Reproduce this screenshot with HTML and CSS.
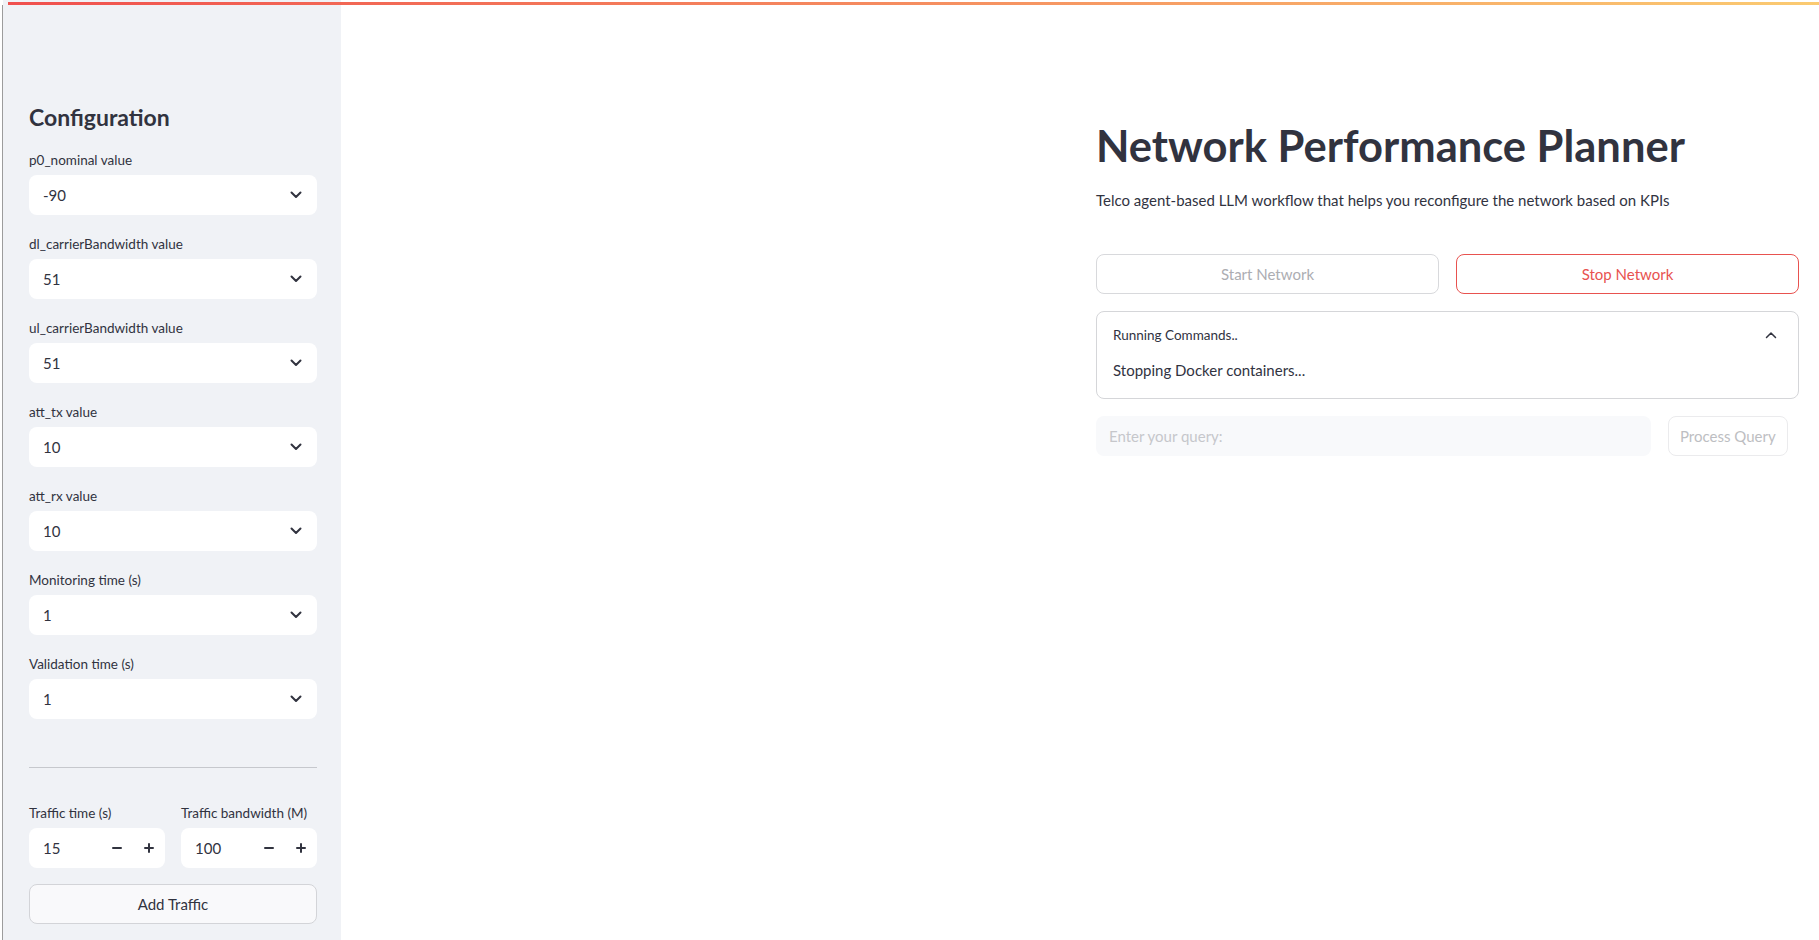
FILE: index.html
```html
<!DOCTYPE html>
<html lang="en">
<head>
<meta charset="utf-8">
<title>Network Performance Planner</title>
<link rel="stylesheet" href="styles.css">
</head>
<body>
<div class="decoration"></div>
<div class="app">
  <div class="edge"></div>
  <aside class="sidebar">
    <h2 class="sb-title">Configuration</h2>
    <div class="field">
      <div class="field-label">p0_nominal value</div>
      <div class="select"><span>-90</span><svg class="chev" viewBox="0 0 12 8" width="12" height="8"><path d="M1.5 1.5 L6 6 L10.5 1.5"/></svg></div>
    </div>
    <div class="field">
      <div class="field-label">dl_carrierBandwidth value</div>
      <div class="select"><span>51</span><svg class="chev" viewBox="0 0 12 8" width="12" height="8"><path d="M1.5 1.5 L6 6 L10.5 1.5"/></svg></div>
    </div>
    <div class="field">
      <div class="field-label">ul_carrierBandwidth value</div>
      <div class="select"><span>51</span><svg class="chev" viewBox="0 0 12 8" width="12" height="8"><path d="M1.5 1.5 L6 6 L10.5 1.5"/></svg></div>
    </div>
    <div class="field">
      <div class="field-label">att_tx value</div>
      <div class="select"><span>10</span><svg class="chev" viewBox="0 0 12 8" width="12" height="8"><path d="M1.5 1.5 L6 6 L10.5 1.5"/></svg></div>
    </div>
    <div class="field">
      <div class="field-label">att_rx value</div>
      <div class="select"><span>10</span><svg class="chev" viewBox="0 0 12 8" width="12" height="8"><path d="M1.5 1.5 L6 6 L10.5 1.5"/></svg></div>
    </div>
    <div class="field">
      <div class="field-label">Monitoring time (s)</div>
      <div class="select"><span>1</span><svg class="chev" viewBox="0 0 12 8" width="12" height="8"><path d="M1.5 1.5 L6 6 L10.5 1.5"/></svg></div>
    </div>
    <div class="field">
      <div class="field-label">Validation time (s)</div>
      <div class="select"><span>1</span><svg class="chev" viewBox="0 0 12 8" width="12" height="8"><path d="M1.5 1.5 L6 6 L10.5 1.5"/></svg></div>
    </div>
    <hr class="divider">
    <div class="num-row">
      <div class="num-field">
        <div class="field-label">Traffic time (s)</div>
        <div class="num-input">
          <span class="num-val">15</span>
          <span class="step"><svg viewBox="0 0 10 10" width="10" height="10"><path d="M1 5 H9"/></svg></span>
          <span class="step"><svg viewBox="0 0 10 10" width="10" height="10"><path d="M1 5 H9 M5 1 V9"/></svg></span>
        </div>
      </div>
      <div class="num-field">
        <div class="field-label">Traffic bandwidth (M)</div>
        <div class="num-input">
          <span class="num-val">100</span>
          <span class="step"><svg viewBox="0 0 10 10" width="10" height="10"><path d="M1 5 H9"/></svg></span>
          <span class="step"><svg viewBox="0 0 10 10" width="10" height="10"><path d="M1 5 H9 M5 1 V9"/></svg></span>
        </div>
      </div>
    </div>
    <button class="btn-secondary">Add Traffic</button>
  </aside>
  <main class="main">
    <div class="block">
      <h1 class="title">Network Performance Planner</h1>
      <p class="subtitle">Telco agent-based LLM workflow that helps you reconfigure the network based on KPIs</p>
      <div class="btn-row">
        <button class="btn btn-disabled">Start Network</button>
        <button class="btn btn-active">Stop Network</button>
      </div>
      <div class="expander">
        <div class="exp-head">
          <span>Running Commands..</span>
          <svg class="chev-up" viewBox="0 0 12 8" width="12" height="8"><path d="M1.5 6.5 L6 2 L10.5 6.5"/></svg>
        </div>
        <div class="exp-body">Stopping Docker containers...</div>
      </div>
      <div class="query-row">
        <div class="query-input">Enter your query:</div>
        <button class="btn-query">Process Query</button>
      </div>
    </div>
  </main>
</div>
</body>
</html>
```
FILE: styles.css
```css
html, body {
  margin: 0;
  padding: 0;
  background: #ffffff;
  overflow: hidden;
  width: 1819px;
  height: 940px;
}

body {
  font-family: Lato, "Noto Sans", "Liberation Sans", sans-serif;
  color: #31333f;
  position: relative;
}

.decoration {
  position: absolute;
  top: 2px;
  left: 8px;
  right: 0;
  height: 3px;
  background-image: linear-gradient(90deg, rgb(240, 80, 78), rgb(255, 253, 128));
  background-size: 2552px 100%;
  background-repeat: no-repeat;
  z-index: 5;
}

.app {
  display: flex;
  height: 940px;
  padding-left: 2px;
  box-sizing: border-box;
}

.edge {
  width: 1px;
  background: #9c9c9c;
  margin-top: 5px;
  flex: none;
}

.sidebar {
  width: 338px;
  flex: none;
  background: #f0f2f6;
  box-sizing: border-box;
  padding: 103px 24px 0 26px;
  display: flex;
  flex-direction: column;
}

.sb-title {
  margin: 0 0 18px;
  font-size: 23px;
  line-height: 29px;
  font-weight: 700;
}

.field {
  margin-bottom: 19px;
}

.field-label {
  font-size: 13.5px;
  line-height: 21px;
  height: 21px;
  margin-bottom: 4px;
}

.select {
  height: 40px;
  background: #ffffff;
  border-radius: 8px;
  display: flex;
  align-items: center;
  justify-content: space-between;
  padding: 0 15px 0 14px;
  font-size: 15px;
}

.chev path, .chev-up path, .step path {
  fill: none;
  stroke: #31333f;
  stroke-width: 2;
  stroke-linecap: round;
  stroke-linejoin: round;
}

.chev-up path {
  stroke-width: 1.5;
}

.divider {
  border: none;
  border-top: 1px solid #c6c8cd;
  margin: 29px 0 35px;
  height: 0;
}

.num-row {
  display: grid;
  grid-template-columns: 1fr 1fr;
  gap: 16px;
}

.num-input {
  height: 40px;
  background: #ffffff;
  border-radius: 8px;
  display: flex;
  align-items: center;
  padding-left: 14px;
  font-size: 15px;
}

.num-val {
  flex: 1;
}

.step {
  width: 32px;
  height: 40px;
  display: flex;
  align-items: center;
  justify-content: center;
}

.btn-secondary {
  margin-top: 16px;
  height: 40px;
  border: 1px solid #d3d4d8;
  border-radius: 8px;
  background: #f9f9fb;
  font-family: inherit;
  font-size: 15px;
  color: #31333f;
}

.main {
  flex: 1;
  min-width: 0;
}

.block {
  width: 703px;
  margin-left: 755px;
  padding-top: 119px;
}

.title {
  margin: 0;
  font-size: 43.5px;
  line-height: 53px;
  font-weight: 700;
}

.subtitle {
  margin: 16px 0 0;
  font-size: 15px;
  line-height: 24px;
}

.btn-row {
  margin-top: 42px;
  display: grid;
  grid-template-columns: 1fr 1fr;
  gap: 17px;
}

.btn {
  height: 40px;
  border-radius: 8px;
  background: #ffffff;
  font-family: inherit;
  font-size: 15px;
}

.btn-disabled {
  border: 1px solid #d8d9dc;
  color: #acadb2;
}

.btn-active {
  border: 1px solid #e8524f;
  color: #e8524f;
}

.expander {
  margin-top: 17px;
  border: 1px solid #d5d6d9;
  border-radius: 8px;
}

.exp-head {
  height: 46px;
  display: flex;
  align-items: center;
  justify-content: space-between;
  padding: 0 21px 0 16px;
  font-size: 13.5px;
}

.exp-body {
  padding: 0 16px 16px;
  font-size: 15px;
  line-height: 24px;
}

.query-row {
  margin-top: 17px;
  display: flex;
  gap: 17px;
}

.query-input {
  width: 555px;
  height: 40px;
  box-sizing: border-box;
  background: #f8f9fb;
  border-radius: 8px;
  padding-left: 13px;
  display: flex;
  align-items: center;
  font-size: 15px;
  color: #c6c7cb;
}

.btn-query {
  height: 40px;
  padding: 0 11px;
  border: 1px solid #ebebed;
  border-radius: 8px;
  background: #ffffff;
  font-family: inherit;
  font-size: 15px;
  color: #bdbec2;
}
```
